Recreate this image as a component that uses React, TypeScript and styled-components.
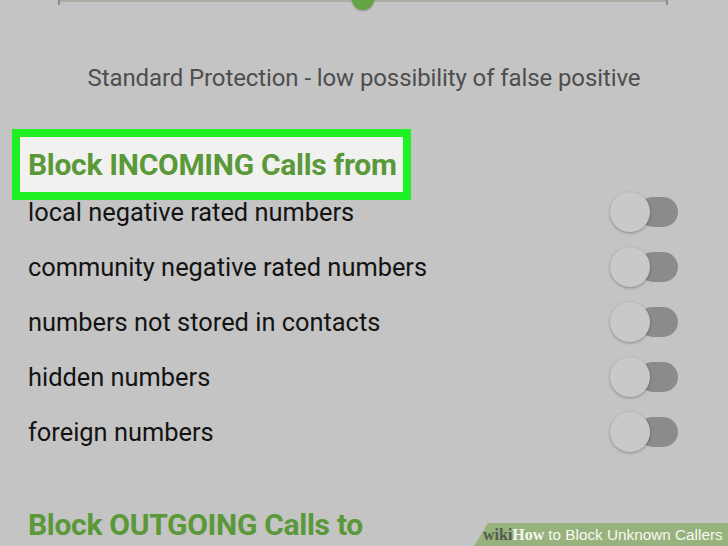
import styled, { createGlobalStyle } from "styled-components"

const GlobalStyle = createGlobalStyle`
  html, body {
    margin: 0;
    padding: 0;
    background: #c4c4c4;
  }
  body {
    font-family: Roboto, "Liberation Sans", sans-serif;
    overflow: hidden;
  }
`

const Screen = styled.div`
  position: relative;
  width: 728px;
  height: 546px;
  overflow: hidden;
  background: #c4c4c4;
`

const Slider = styled.div`
  position: relative;
  height: 10px;
  margin: 0 60px 0 58px;
  border-top: 2px solid #a9aea4;
  &::before,
  &::after {
    content: "";
    position: absolute;
    top: -2px;
    width: 2px;
    height: 5px;
    background: #8c8c8c;
  }
  &::before { left: 0; }
  &::after { right: 0; }
`

const SliderThumb = styled.div`
  position: absolute;
  left: 294px;
  top: -14px;
  width: 22px;
  height: 22px;
  border-radius: 50%;
  background: #64a444;
  box-shadow: 0 1px 2px rgba(0, 0, 0, 0.25);
`

const Caption = styled.p`
  margin: 51px 0 0;
  text-align: center;
  font-size: 24px;
  line-height: 30px;
  color: #4e4e4e;
  letter-spacing: -0.1px;
`

const SectionTitle = styled.h2<{ $marked?: boolean }>`
  display: inline-block;
  margin: ${({ $marked }) => ($marked ? "44px 0 -8px 20px" : "38px 0 0 20px")};
  padding: 0 6px 0 8px;
  height: 55px;
  line-height: 55px;
  font-size: 30px;
  font-weight: 700;
  color: #5a983a;
  letter-spacing: -0.3px;
  background: ${({ $marked }) => ($marked ? "#f1f2f0" : "transparent")};
  outline: ${({ $marked }) => ($marked ? "8px solid #1ff024" : "none")};
  position: relative;
  z-index: 1;
`

const OptionList = styled.ul`
  list-style: none;
  margin: 0;
  padding: 0 50px 0 28px;
`

const OptionRow = styled.li`
  display: flex;
  align-items: center;
  justify-content: space-between;
  height: 55px;
  font-size: 25.4px;
  color: #131313;
`

const Toggle = styled.span`
  position: relative;
  width: 68px;
  height: 42px;
  display: flex;
  align-items: center;
  justify-content: flex-end;
`

const ToggleTrack = styled.span`
  width: 40px;
  height: 30px;
  border-radius: 15px;
  background: #8b8b8b;
`

const ToggleKnob = styled.span`
  position: absolute;
  left: 0;
  top: 1px;
  width: 40px;
  height: 40px;
  border-radius: 50%;
  background: #c9c9c9;
  box-shadow: 0 1px 3px rgba(0, 0, 0, 0.3);
`

const Watermark = styled.div`
  position: absolute;
  right: 0;
  bottom: 0;
  width: 254px;
  height: 23px;
  background: #97b27c;
  clip-path: polygon(14px 0, 100% 0, 100% 100%, 0 100%);
  display: flex;
  align-items: center;
  padding-left: 9px;
  box-sizing: border-box;
  font-size: 15.3px;
  white-space: nowrap;
`

const WikiWord = styled.span<{ $light?: boolean }>`
  font-family: "Liberation Serif", "DejaVu Serif", serif;
  font-weight: 700;
  font-size: 16px;
  color: ${({ $light }) => ($light ? "#f4f6ef" : "#555a50")};
`

const WatermarkRest = styled.span`
  font-family: "Liberation Sans", Arial, sans-serif;
  color: #f7f8f4;
  margin-left: 4px;
`

const options = [
  "local negative rated numbers",
  "community negative rated numbers",
  "numbers not stored in contacts",
  "hidden numbers",
  "foreign numbers",
]

export default function App() {
  return (
    <Screen>
      <GlobalStyle />
      <Slider>
        <SliderThumb />
      </Slider>
      <Caption>Standard Protection - low possibility of false positive</Caption>
      <SectionTitle $marked>Block INCOMING Calls from</SectionTitle>
      <OptionList>
        {options.map((label) => (
          <OptionRow key={label}>
            {label}
            <Toggle>
              <ToggleTrack />
              <ToggleKnob />
            </Toggle>
          </OptionRow>
        ))}
      </OptionList>
      <SectionTitle>Block OUTGOING Calls to</SectionTitle>
      <Watermark>
        <WikiWord>wiki</WikiWord>
        <WikiWord $light>How</WikiWord>
        <WatermarkRest>to Block Unknown Callers</WatermarkRest>
      </Watermark>
    </Screen>
  )
}
